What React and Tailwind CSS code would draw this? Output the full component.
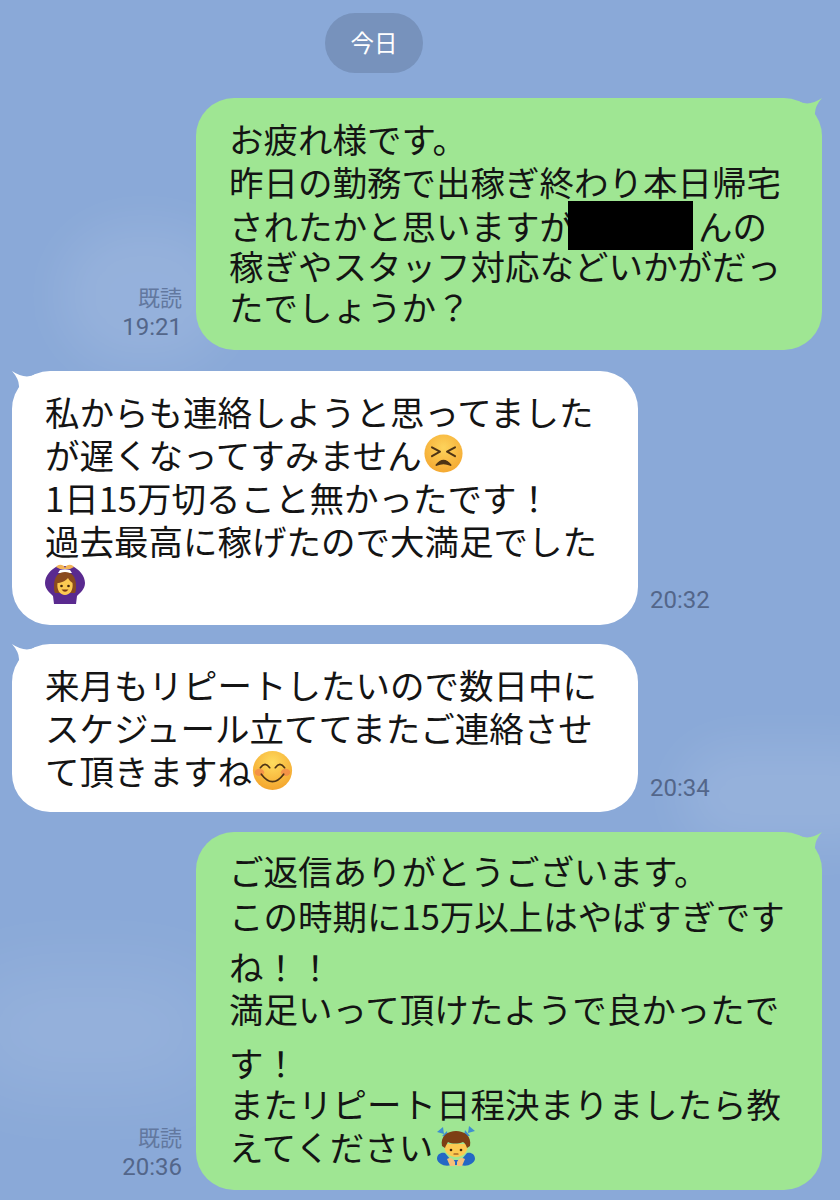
import React from "react";

const jp = "font-['Noto_Sans_CJK_JP','Noto_Sans',sans-serif]";

// little curled tail that replaces the rounded top corner of a bubble
const Tail = ({ side, color }) => (
	<svg
		viewBox="0 0 24 24"
		className={`absolute top-0 w-[24px] h-[24px] ${side === "right" ? "right-0" : "left-0 scale-x-[-1]"}`}
	>
		<path d="M0 3 Q11 9 24 0 Q17 8 17 15 L16 24 L0 24 Z" fill={color} />
	</svg>
);

const Bubble = ({ mine, h, children }) => (
	<div className={`relative w-[626px] rounded-[38px] pl-[33px] ${h} ${mine ? "bg-[#9fe693]" : "bg-white"}`}>
		<Tail side={mine ? "right" : "left"} color={mine ? "#9fe693" : "#ffffff"} />
		<div className="relative">{children}</div>
	</div>
);

const Line = ({ className = "h-[43px]", children }) => (
	<div className={`flex items-center whitespace-nowrap leading-none ${className}`}>{children}</div>
);

const Stamp = ({ read, time }) => (
	<div className="flex flex-col items-end text-[#53668a]">
		{read && <span className="text-[22px] leading-[31px] text-[#62789f]">既読</span>}
		<span className="font-['Roboto',sans-serif] text-[24px] leading-[31px]">{time}</span>
	</div>
);

const TiredFace = () => (
	<svg viewBox="0 0 44 44" className="w-[39px] h-[39px] shrink-0 ml-[2px] mt-[-2px]">
		<defs>
			<radialGradient id="tired" cx="50%" cy="35%" r="70%">
				<stop offset="0%" stopColor="#fdd35c" />
				<stop offset="100%" stopColor="#f4a62e" />
			</radialGradient>
		</defs>
		<circle cx="22" cy="22" r="21.5" fill="url(#tired)" />
		<path d="M9 15 L18 20 L9 25 M35 15 L26 20 L35 25" fill="none" stroke="#4e3415" strokeWidth="2.2" strokeLinecap="round" strokeLinejoin="round" />
		<path d="M14 35 Q22 25 30 35 Q22 31 14 35 Z" fill="#4e3415" stroke="#4e3415" strokeWidth="2" strokeLinejoin="round" />
	</svg>
);

const SmileFace = () => (
	<svg viewBox="0 0 44 44" className="w-[41px] h-[41px] shrink-0">
		<defs>
			<radialGradient id="smile" cx="50%" cy="30%" r="75%">
				<stop offset="0%" stopColor="#fedc5e" />
				<stop offset="100%" stopColor="#f3a12a" />
			</radialGradient>
		</defs>
		<circle cx="22" cy="22" r="21" fill="url(#smile)" />
		<ellipse cx="8" cy="24" rx="5" ry="4" fill="#f2824a" opacity="0.7" />
		<ellipse cx="36" cy="24" rx="5" ry="4" fill="#f2824a" opacity="0.7" />
		<path d="M9 19 Q14 12 19 19 M25 19 Q30 12 35 19" fill="none" stroke="#4e3415" strokeWidth="1.8" strokeLinecap="round" />
		<path d="M10 26 Q22 42 34 26" fill="none" stroke="#4e3415" strokeWidth="1.8" strokeLinecap="round" />
	</svg>
);

// woman holding her arms over her head
const OkWoman = () => (
	<svg viewBox="0 0 40 40" className="w-[40px] h-[40px] shrink-0">
		<path d="M13 2 C6 5 0 12 0 19 C0 25 5 29 8 32 L9 40 L31 40 L32 32 C35 29 40 25 40 19 C40 12 34 5 27 2 Z" fill="#5a2a8f" />
		<path d="M15 6 Q20 4.5 25 6 L27 9 L13 9 Z" fill="#ffffff" />
		<path d="M11 3 Q14 -1 19 2 L20 4 L21 2 Q26 -1 29 3 L25 5 L20 5 L15 5 Z" fill="#f2b458" />
		<path d="M9 22 C9 12 14 8 20 8 C26 8 31 12 31 22 C31 25 31 27 30 29 L10 29 C9 27 9 25 9 22 Z" fill="#8a4a1e" />
		<path d="M12.5 19 C15 19 21 17 23 14 C24 16 26 18 27.5 19 C28.5 26 25 31 20 31 C15 31 11.5 26 12.5 19 Z" fill="#fcca52" />
		<circle cx="16.5" cy="22" r="1.3" fill="#40250c" />
		<circle cx="23.5" cy="22" r="1.3" fill="#40250c" />
		<path d="M16.5 25.5 Q20 30 23.5 25.5 Z" fill="#7a3a12" />
	</svg>
);

// boy bowing with sweat marks either side of his head
const BowingBoy = () => (
	<svg viewBox="0 0 40 41" className="w-[40px] h-[41px] shrink-0 ml-[3px]">
		<path d="M1 6 L7 1 L8 8 Z M6 10 L11 5 L12 11 Z M39 5 L33 0 L32 7 Z M34 10 L29 4 L28 10 Z" fill="#3f8fd0" />
		<path d="M1 33 C1 28 5 26 9 27 L15 34 L25 34 L31 27 C35 26 39 28 39 33 C38 38 31 41 25 39 L15 39 C9 41 2 38 1 33 Z" fill="#2468c4" />
		<path d="M11 33 Q16 30 19 36 L19 40 L14 40 Z M29 33 Q24 30 21 36 L21 40 L26 40 Z" fill="#f4c07a" />
		<path d="M9 18 L31 18 C33 26 27 31 20 31 C13 31 7 26 9 18 Z" fill="#fcca52" />
		<path d="M6 20 C4 10 12 5 20 5 C28 5 36 10 34 20 L31 22 C30 19 29 17 27 16 C22 18 16 18 12 16 C11 18 10 19 9 22 Z" fill="#7d3f14" />
		<circle cx="15" cy="24" r="1.3" fill="#40250c" />
		<circle cx="25" cy="24" r="1.3" fill="#40250c" />
		<path d="M18 28 H22" stroke="#7a3a12" strokeWidth="1.2" strokeLinecap="round" />
	</svg>
);

export default function App() {
	return (
		<div className={`relative w-[840px] h-[1200px] overflow-hidden bg-[#8aa9d8] ${jp} text-[34.5px] text-[#141414]`}>
			{/* faint clouds in the wallpaper */}
			<div className="absolute left-[60px] top-[225px] w-[170px] h-[140px] rounded-full bg-white/10 blur-xl" />
			<div className="absolute left-[680px] top-[745px] w-[220px] h-[100px] rounded-full bg-white/10 blur-xl" />
			<div className="absolute left-[-40px] top-[970px] w-[260px] h-[120px] rounded-full bg-white/10 blur-2xl" />

			<div className="relative flex flex-col px-[12px] pr-[18px] pt-[13px]">
				<div className="self-start ml-[313px] mb-[25px] flex h-[60px] w-[98px] items-center justify-center rounded-full bg-[#7792bc] text-[23.5px] text-white">
					今日
				</div>

				<div className="flex items-end justify-end gap-[14px]">
					<div className="mb-[7px]"><Stamp read time="19:21" /></div>
					<Bubble mine h="h-[252px] pt-[20px]">
						<Line className="h-[40px]">お疲れ様です。</Line>
						<Line className="h-[40px] mt-[3px]">昨日の勤務で出稼ぎ終わり本日帰宅</Line>
						<Line className="h-[40px] mt-[4px]">
							されたかと思いますが
							<span className="inline-block h-[49px] w-[125px] ml-[-6px] mr-[5px] mt-[1px] bg-black" />
							んの
						</Line>
						<Line className="h-[40px]">稼ぎやスタッフ対応などいかがだっ</Line>
						<Line className="h-[40px] mt-[1px]">たでしょうか？</Line>
					</Bubble>
				</div>

				<div className="mt-[21px] flex items-end gap-[12px]">
					<Bubble h="h-[254px] pt-[19px]">
						<Line>私からも連絡しようと思ってました</Line>
						<Line>が遅くなってすみません<TiredFace /></Line>
						<Line>1日15万切ること無かったです！</Line>
						<Line>過去最高に稼げたので大満足でした</Line>
						<Line><OkWoman /></Line>
					</Bubble>
					<div className="mb-[9px]"><Stamp time="20:32" /></div>
				</div>

				<div className="mt-[19px] flex items-end gap-[12px]">
					<Bubble h="h-[168px] pt-[19px]">
						<Line>来月もリピートしたいので数日中に</Line>
						<Line>スケジュール立ててまたご連絡させ</Line>
						<Line>て頂きますね<SmileFace /></Line>
					</Bubble>
					<div className="mb-[8px]"><Stamp time="20:34" /></div>
				</div>

				<div className="mt-[20px] flex items-end justify-end gap-[14px]">
					<div className="mb-[7px]"><Stamp read time="20:36" /></div>
					<Bubble mine h="h-[358px] pt-[18px]">
						<Line className="h-[40px]">ご返信ありがとうございます。</Line>
						<Line className="h-[40px] mt-[5px]">この時期に15万以上はやばすぎです</Line>
						<Line className="h-[40px] mt-[11px]">ね！！</Line>
						<Line className="h-[40px] mt-[2px]">満足いって頂けたようで良かったで</Line>
						<Line className="h-[40px] mt-[14px]">す！</Line>
						<Line className="h-[40px] mt-[1px]">またリピート日程決まりましたら教</Line>
						<Line className="h-[40px] mt-[3px]">えてください<BowingBoy /></Line>
					</Bubble>
				</div>
			</div>
		</div>
	);
}
